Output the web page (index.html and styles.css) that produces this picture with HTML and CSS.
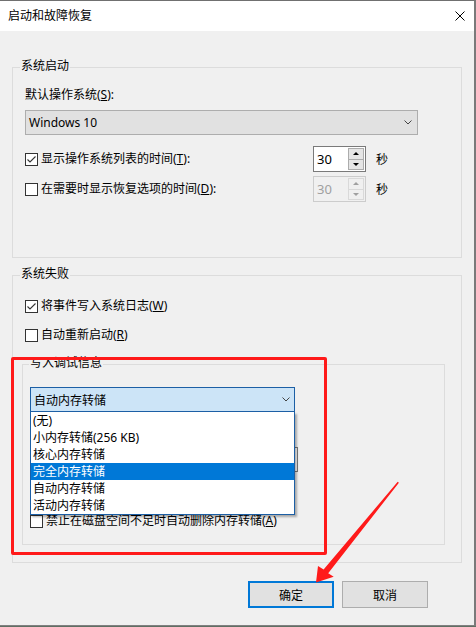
FILE: index.html
```html
<!DOCTYPE html>
<html lang="zh-CN">
<head>
  <meta charset="UTF-8">
  <title>启动和故障恢复</title>
  <link rel="stylesheet" href="styles.css">
</head>
<body>
  <div class="window">
    <div class="titlebar">
      <span>启动和故障恢复</span>
      <svg class="close" width="10" height="10" viewBox="0 0 10 10">
        <path d="M0.5 0.5 L9.5 9.5 M9.5 0.5 L0.5 9.5" stroke="#000" stroke-width="1" fill="none"/>
      </svg>
    </div>

    <div class="dialog">
      <div class="group startup">
        <span class="legend">系统启动</span>
        <div class="field-label">默认操作系统(<u>S</u>):</div>
        <div class="select">
          <span>Windows 10</span>
          <svg width="8" height="5" viewBox="0 0 8 5"><path d="M0.5 0.5 L4 4 L7.5 0.5" stroke="#444" fill="none"/></svg>
        </div>
        <div class="spin-row">
          <div class="check">
            <span class="box"><svg width="11" height="11" viewBox="0 0 11 11"><path d="M1.5 5.5 L4 8 L9.5 2.5" stroke="#333" stroke-width="1.1" fill="none"/></svg></span>
            <span>显示操作系统列表的时间(<u>T</u>):</span>
          </div>
          <div class="spin">
            <span class="spin-value">30</span>
            <span class="spin-btns"><span class="up"></span><span class="down"></span></span>
          </div>
          <span class="unit">秒</span>
        </div>
        <div class="spin-row">
          <div class="check">
            <span class="box"></span>
            <span>在需要时显示恢复选项的时间(<u>D</u>):</span>
          </div>
          <div class="spin disabled">
            <span class="spin-value">30</span>
            <span class="spin-btns"><span class="up"></span><span class="down"></span></span>
          </div>
          <span class="unit">秒</span>
        </div>
      </div>

      <div class="group failure">
        <span class="legend">系统失败</span>
        <div class="check">
          <span class="box"><svg width="11" height="11" viewBox="0 0 11 11"><path d="M1.5 5.5 L4 8 L9.5 2.5" stroke="#333" stroke-width="1.1" fill="none"/></svg></span>
          <span>将事件写入系统日志(<u>W</u>)</span>
        </div>
        <div class="check">
          <span class="box"></span>
          <span>自动重新启动(<u>R</u>)</span>
        </div>

        <div class="subgroup">
          <span class="legend">写入调试信息</span>
          <div class="combo">
            <span>自动内存转储</span>
            <svg width="8" height="5" viewBox="0 0 8 5"><path d="M0.5 0.5 L4 4 L7.5 0.5" stroke="#444" fill="none"/></svg>
            <div class="combo-list">
              <div>(无)</div>
              <div>小内存转储(256 KB)</div>
              <div>核心内存转储</div>
              <div class="selected">完全内存转储</div>
              <div>自动内存转储</div>
              <div>活动内存转储</div>
            </div>
          </div>
          <div class="textbox"></div>
          <div class="check no-delete">
            <span class="box"></span>
            <span>禁止在磁盘空间不足时自动删除内存转储(<u>A</u>)</span>
          </div>
        </div>
      </div>

      <div class="buttons">
        <div class="btn default">确定</div>
        <div class="btn">取消</div>
      </div>
    </div>

    <!-- annotation drawn over the dialog -->
    <div class="annotation"></div>
    <svg class="arrow" width="110" height="115" viewBox="0 0 110 115">
      <polygon points="97.7,6.8 98.9,7.8 28.2,98.2 33.7,101.7 16,107.5 18,91 23.6,94.4" fill="#ff1a1a"/>
    </svg>
  </div>
</body>
</html>
```

FILE: styles.css
```css
body {
  margin: 0;
  background: #5f6f63;
  font-family: "Noto Sans", "Noto Sans CJK SC", sans-serif;
  font-size: 12px;
  color: #000;
}
.window {
  position: relative;
  width: 476px;
  height: 626px;
  box-sizing: border-box;
  background: #f0f0f0;
  border-top: 1px solid #707070;
  border-right: 2px solid #7a7a7a;
  border-bottom: 1px solid #808080;
  overflow: hidden;
}
.titlebar {
  height: 30px;
  background: #fff;
  display: flex;
  align-items: center;
  justify-content: space-between;
  padding: 0 9px 0 8px;
  line-height: 16px;
}
.close {
  display: block;
}
.dialog {
  padding: 36px 0 0 12px;
}
.group {
  position: relative;
  width: 450px;
  box-sizing: border-box;
  border: 1px solid #dcdcdc;
}
.legend {
  position: absolute;
  top: -10px;
  left: 7px;
  padding: 0 1px;
  background: #f0f0f0;
  line-height: 16px;
}
.startup {
  padding: 19px 0 55px 12px;
}
.field-label {
  line-height: 16px;
}
.select {
  margin-top: 7px;
  width: 393px;
  height: 25px;
  box-sizing: border-box;
  border: 1px solid #adadad;
  background: #e1e1e1;
  display: flex;
  align-items: center;
  justify-content: space-between;
  padding: 0 5px 0 3px;
}
.check {
  display: flex;
  align-items: center;
  line-height: 16px;
}
.box {
  width: 13px;
  height: 13px;
  box-sizing: border-box;
  border: 1px solid #333;
  background: #fff;
  margin-right: 3px;
  flex-shrink: 0;
}
.box svg {
  display: block;
}
.spin-row {
  display: flex;
  align-items: center;
  height: 26px;
  margin-top: 11px;
}
.spin-row + .spin-row {
  margin-top: 4px;
}
.spin-row .check {
  width: 288px;
}
.spin {
  width: 53px;
  height: 26px;
  box-sizing: border-box;
  border: 1px solid #7a7a7a;
  background: #fff;
  display: flex;
}
.spin-value {
  flex: 1;
  padding-left: 3px;
  line-height: 24px;
  font-size: 13px;
}
.spin-btns {
  width: 17px;
  display: flex;
  flex-direction: column;
  padding: 1px 1px 1px 0;
  box-sizing: border-box;
}
.spin-btns span {
  flex: 1;
  background: #e5e5e5;
  border: 1px solid #acacac;
  display: flex;
  align-items: center;
  justify-content: center;
}
.spin-btns .down {
  border-top: none;
}
.up::after,
.down::after {
  content: "";
  border-left: 3px solid transparent;
  border-right: 3px solid transparent;
}
.up::after {
  border-bottom: 3px solid #000;
}
.down::after {
  border-top: 3px solid #000;
}
.spin.disabled {
  border-color: #cccccc;
  background: #f0f0f0;
  color: #a0a0a0;
}
.spin.disabled .spin-btns span {
  background: #f0f0f0;
  border-color: #d9d9d9;
}
.spin.disabled .up::after {
  border-bottom-color: #a0a0a0;
}
.spin.disabled .down::after {
  border-top-color: #a0a0a0;
}
.unit {
  margin-left: 10px;
}
.failure {
  margin-top: 17px;
  padding: 22px 0 17px 12px;
}
.failure > .check + .check {
  margin-top: 13px;
}
.subgroup {
  position: relative;
  margin: 21px 0 0 -3px;
  width: 423px;
  height: 181px;
  box-sizing: border-box;
  border: 1px solid #dcdcdc;
  padding: 22px 0 0 7px;
}
.subgroup .legend {
  left: 6px;
}
.combo {
  position: relative;
  width: 265px;
  height: 25px;
  box-sizing: border-box;
  border: 1px solid #1c5fa5;
  background: #cce4f7;
  display: flex;
  align-items: center;
  justify-content: space-between;
  padding: 0 4px 0 3px;
}
.combo-list {
  position: absolute;
  top: 24px;
  left: -1px;
  width: 265px;
  box-sizing: border-box;
  border: 1px solid #1c5fa5;
  border-top: none;
  background: #fff;
  box-shadow: 2px 2px 2px rgba(0, 0, 0, 0.3);
  z-index: 2;
}
.combo-list div {
  height: 17px;
  line-height: 17px;
  padding-left: 2px;
}
.combo-list .selected {
  background: #0078d7;
  color: #fff;
}
.textbox {
  margin-top: 35px;
  width: 268px;
  height: 25px;
  box-sizing: border-box;
  border: 1px solid #7a7a7a;
  background: #fff;
}
.no-delete {
  margin-top: 41px;
}
.buttons {
  display: flex;
  gap: 8px;
  margin: 18px 0 0 236px;
}
.btn {
  width: 86px;
  height: 27px;
  box-sizing: border-box;
  border: 1px solid #adadad;
  background: #e1e1e1;
  display: flex;
  align-items: center;
  justify-content: center;
}
.btn.default {
  border: 2px solid #0078d7;
}
.annotation {
  position: absolute;
  left: 11px;
  top: 356px;
  width: 316px;
  height: 198px;
  box-sizing: border-box;
  border: 3px solid #ff1a1a;
  border-radius: 2px;
  z-index: 3;
}
.arrow {
  position: absolute;
  left: 300px;
  top: 474px;
  z-index: 3;
}
```
